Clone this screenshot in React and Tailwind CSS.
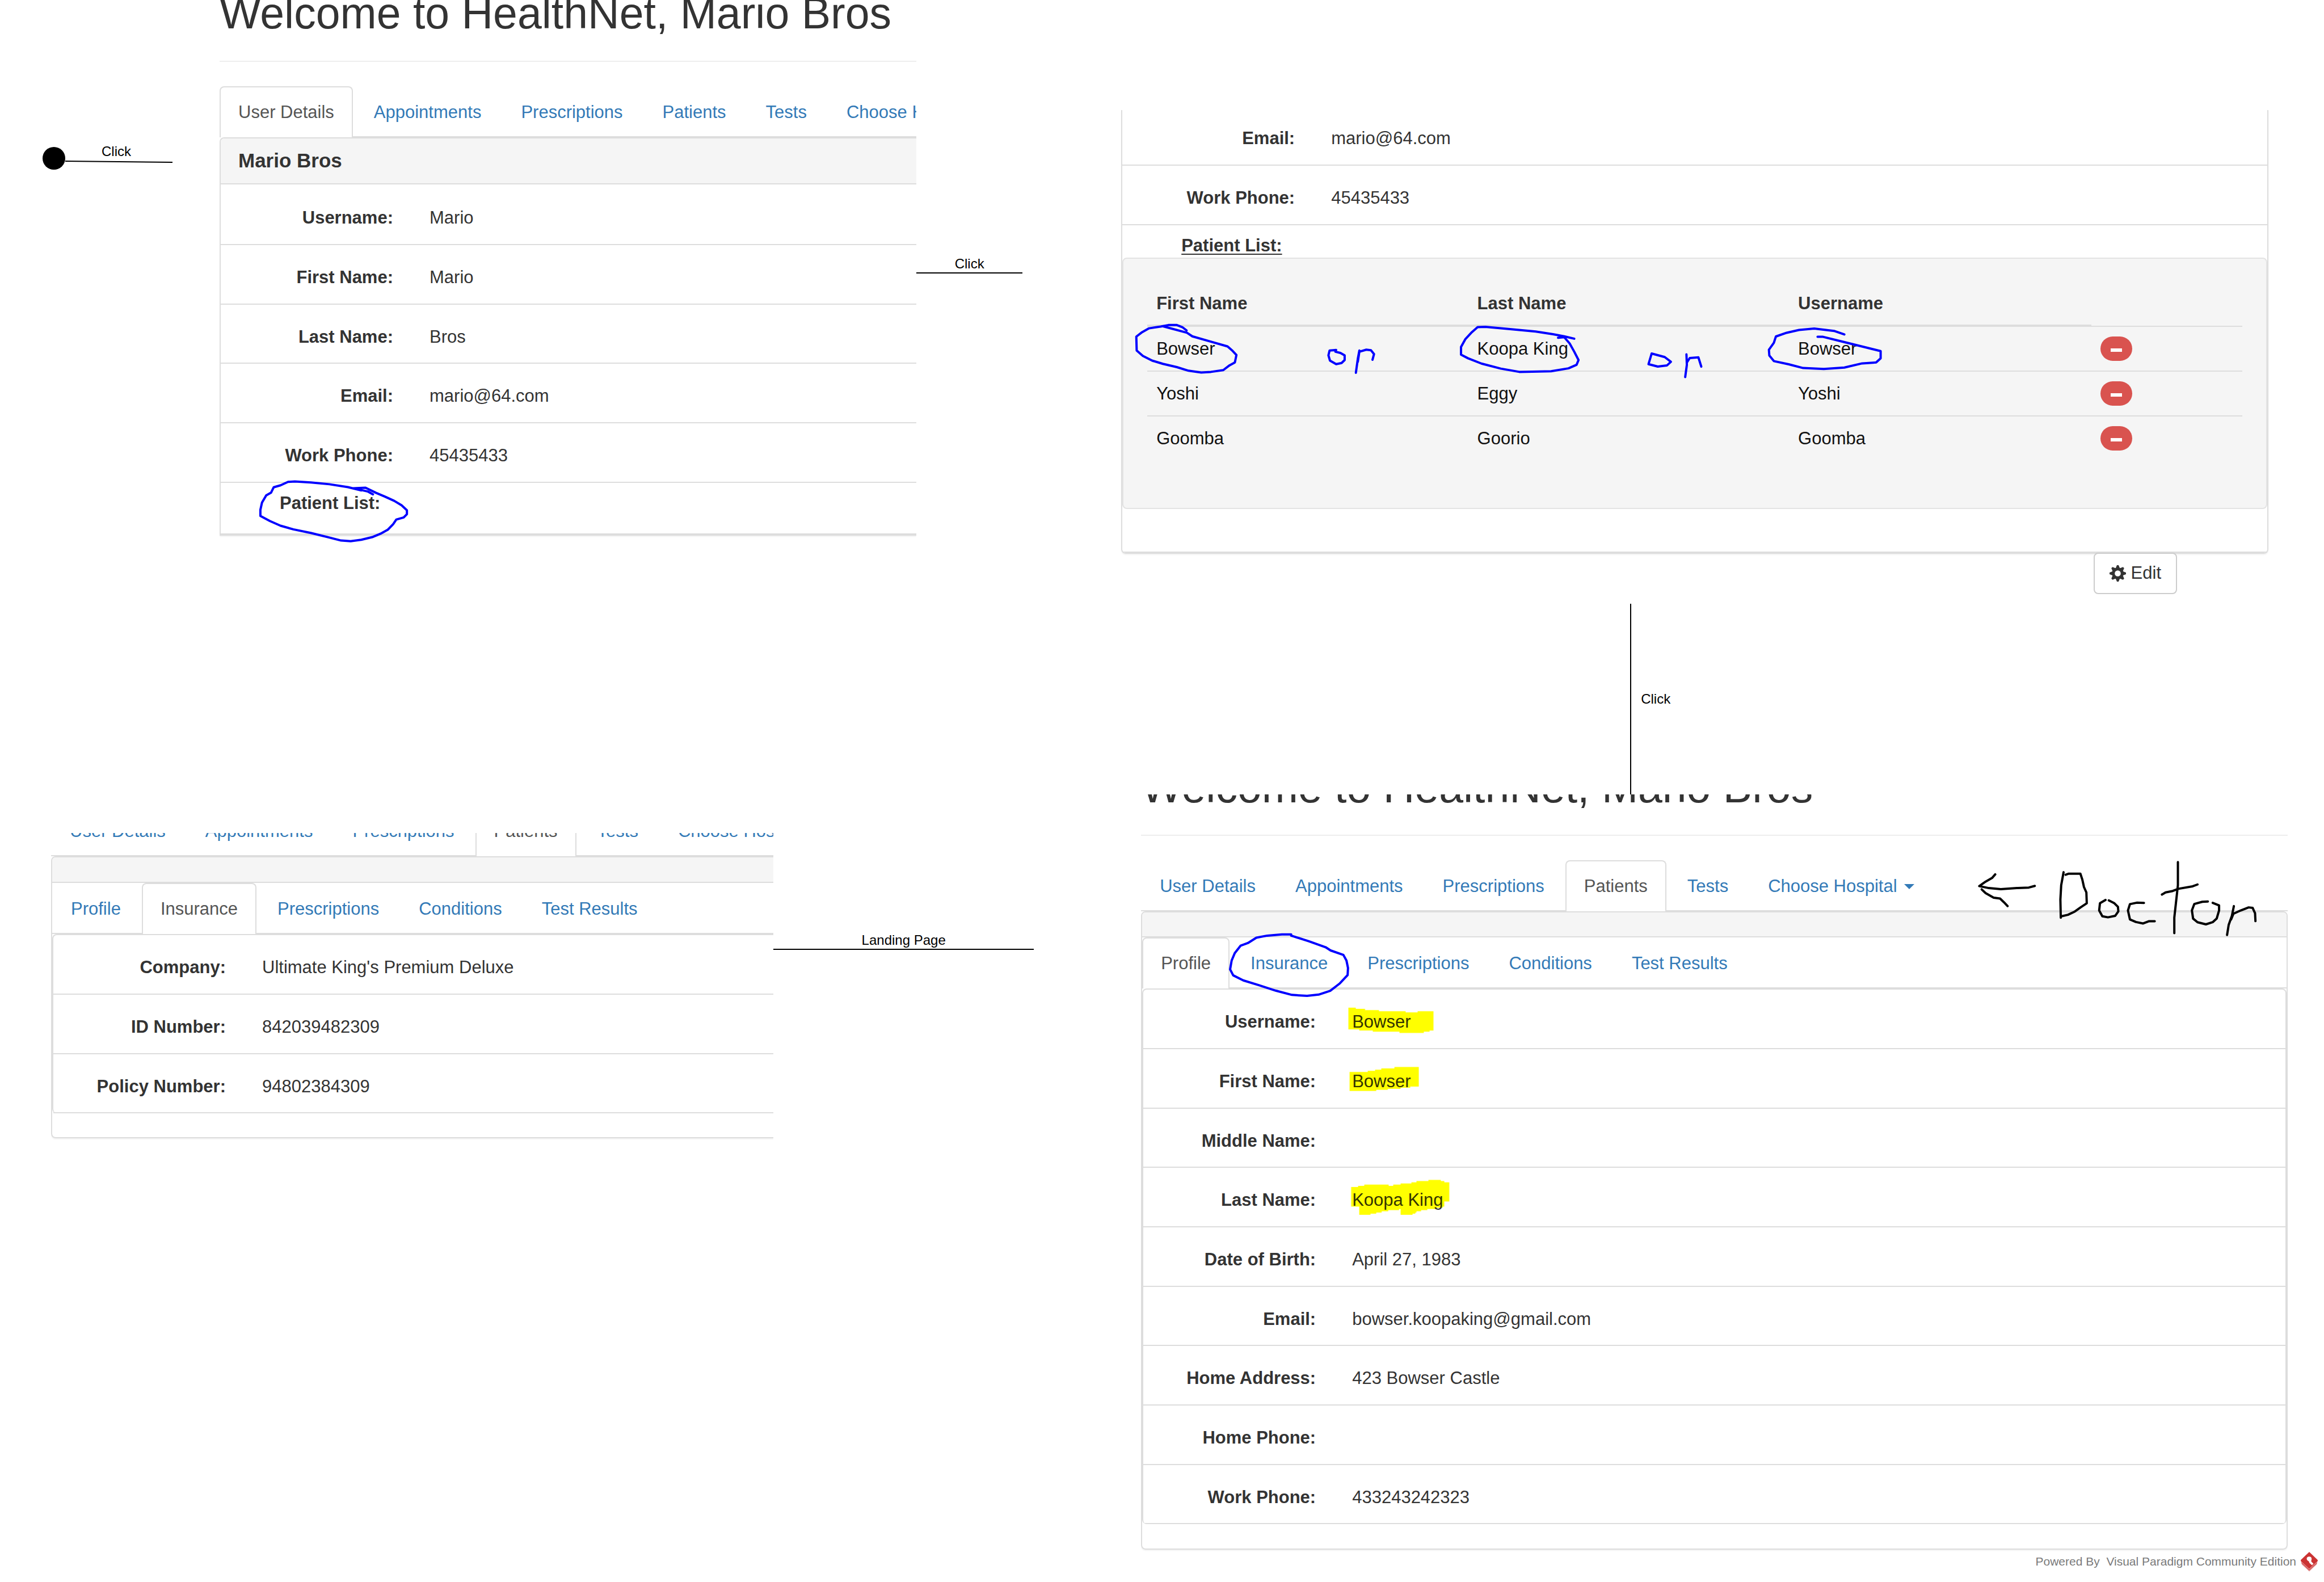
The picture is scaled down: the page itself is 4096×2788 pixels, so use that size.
import React from "react";

const MAIN_TABS = ["User Details", "Appointments", "Prescriptions", "Patients", "Tests", "Choose Hospital"];
const PATIENT_TABS = ["Profile", "Insurance", "Prescriptions", "Conditions", "Test Results"];

const PATIENTS = [
  ["Bowser", "Koopa King", "Bowser"],
  ["Yoshi", "Eggy", "Yoshi"],
  ["Goomba", "Goorio", "Goomba"],
];

function Tabs({ items, active, label, caret }) {
  return (
    <nav aria-label={label} className="flex gap-1 whitespace-nowrap shadow-[inset_0_-2px_0_#ddd]">
      {items.map((item) => (
        <a
          key={item}
          href="#"
          aria-current={item === active ? "page" : undefined}
          className={
            item === active
              ? "flex h-[90px] items-center rounded-t-lg border-2 border-b-0 border-[#ddd] bg-white px-[31px] text-[#555]"
              : "flex h-[90px] items-center border-2 border-b-0 border-transparent px-[31px] text-[#337ab7]"
          }
        >
          {item}
          {caret && item === "Choose Hospital" && (
            <svg viewBox="0 0 18 9" className="ml-3 h-[9px] w-[18px]" aria-hidden="true">
              <path d="M0 0H18L9 9Z" fill="#337ab7" />
            </svg>
          )}
        </a>
      ))}
    </nav>
  );
}

function Title() {
  return (
    <h1 className="border-b-2 border-[#eee] pb-[42px] text-[77px] leading-[84px] whitespace-nowrap text-[#333]">
      Welcome to HealthNet, Mario Bros
    </h1>
  );
}

function Rows({ rows }) {
  return (
    <dl>
      {rows.map(([name, value]) => (
        <div
          key={name}
          className="flex h-[105px] items-center gap-16 border-b-2 border-[#ddd] pt-3 whitespace-nowrap nth-[3n]:h-[104px]"
        >
          <dt className="w-[304px] text-right font-bold">{name}</dt>
          <dd>{value}</dd>
        </div>
      ))}
    </dl>
  );
}

function Ink({ label, color, children }) {
  return (
    <svg
      role="img"
      aria-label={label}
      className="pointer-events-none absolute top-0 left-0 h-px w-px overflow-visible"
      fill="none"
      stroke={color}
      strokeWidth="4"
      strokeLinecap="round"
      strokeLinejoin="round"
    >
      {children}
    </svg>
  );
}

function Stroke({ d }) {
  return <path d={d} vectorEffect="non-scaling-stroke" />;
}

function Arrow({ label }) {
  return (
    <div className="flex flex-col">
      <span className="text-center text-2xl leading-[30px] text-black">{label}</span>
      <div className="h-[2px] bg-black" />
    </div>
  );
}

function DoctorDetails() {
  return (
    <section className="relative min-w-0 flex-1 overflow-hidden pb-4">
      <div className="-mt-[19px] mb-[43px]">
        <Title />
      </div>
      <Tabs items={MAIN_TABS} active="User Details" label="Doctor sections" />
      <div className="rounded-tl-lg border-y-2 border-l-2 border-[#ddd] shadow-[0_2px_2px_rgba(0,0,0,0.05)]">
        <h2 className="mb-[2px] flex h-[81px] items-center rounded-tl-md border-b-2 border-[#ddd] bg-[#f5f5f5] px-[31px] text-[35px] font-bold">
          Mario Bros
        </h2>
        <Rows
          rows={[
            ["Username:", "Mario"],
            ["First Name:", "Mario"],
            ["Last Name:", "Bros"],
            ["Email:", "mario@64.com"],
            ["Work Phone:", "45435433"],
          ]}
        />
        <div className="border-b-2 border-[#ddd] pt-[14px] pb-8 pl-[104px] leading-[43px]">
          <button className="block font-bold">Patient List:</button>
        </div>
      </div>
      <Ink label="Patient List circled" color="#00f">
        <g transform="matrix(0.9357 0 0 0.3179 -31 463)">
          <Stroke d="M322 1284L312 1268L285 1250L308 1247L328 1276L345 1297L362 1320L376 1345L386 1372L386 1394L380 1412L366 1424L360 1450L350 1480L338 1500L322 1520L300 1536L280 1544L262 1540L238 1522L205 1498L172 1478L148 1458L128 1432L110 1404L110 1370L113 1330L121 1290L130 1275L135 1245L148 1234L162 1215L175 1213L205 1218L240 1228L275 1244L300 1262" />
        </g>
      </Ink>
    </section>
  );
}

function PatientListPanel() {
  return (
    <section className="relative mt-[194px] mr-[98px] ml-[133px]">
      <div className="overflow-hidden rounded-b-lg border-2 border-t-0 border-[#ddd] shadow-[0_2px_2px_rgba(0,0,0,0.05)]">
        <div className="-mt-2 pt-px">
          <Rows
            rows={[
              ["Email:", "mario@64.com"],
              ["Work Phone:", "45435433"],
            ]}
          />
        </div>
        <div className="border-b-2 border-[#ddd] pt-[14px] pb-[75px]">
          <button className="ml-[104px] block leading-[43px] font-bold underline decoration-2 underline-offset-4">
            Patient List:
          </button>
          <div className="rounded-lg border-2 border-[#e3e3e3] bg-[#f5f5f5] px-[42px] pt-[41px] pb-[84px]">
            <table className="w-full table-fixed border-separate border-spacing-0 text-left leading-[43px]">
              <colgroup>
                <col className="w-[29.3%]" />
                <col className="w-[29.3%]" />
                <col className="w-[27.6%]" />
                <col />
              </colgroup>
              <thead>
                <tr>
                  {["First Name", "Last Name", "Username"].map((h) => (
                    <th key={h} scope="col" className="border-b-2 border-[#ddd] px-4 py-4 font-bold">
                      {h}
                    </th>
                  ))}
                </tr>
              </thead>
              <tbody className="text-[#111]">
                {PATIENTS.map((row) => (
                  <tr key={row[0]}>
                    {row.map((cell, i) => (
                      <td key={i} className="border-t-2 border-[#ddd] px-4 py-[17px]">
                        {cell}
                      </td>
                    ))}
                    <td className="border-t-2 border-[#ddd] px-4 py-[17px]">
                      <button
                        aria-label={"Remove " + row[0]}
                        className="flex h-[43px] w-[56px] items-center justify-center rounded-full bg-[#d9534f] pt-1"
                      >
                        <span className="h-[6px] w-5 bg-white" />
                      </button>
                    </td>
                  </tr>
                ))}
              </tbody>
            </table>
          </div>
        </div>
      </div>
      <div className="flex justify-end pr-[161px]">
        <button className="relative -mt-[2px] flex h-[73px] items-center gap-[9px] rounded-lg border-2 border-[#ccc] bg-white px-[26px]">
          <svg viewBox="-15 -15 30 30" className="h-[29px] w-[29px]" fill="none" aria-hidden="true">
            <circle r="8" stroke="#333" strokeWidth="5" />
            <g fill="#333">
              {[0, 45, 90, 135, 180, 225, 270, 315].map((a) => (
                <path key={a} d="M-4 -9L-1.500 -15H1.500L4 -9Z" transform={"rotate(" + a + ")"} />
              ))}
            </g>
          </svg>
          Edit
        </button>
      </div>
      <Ink label="Bowser or Koopa King or Bowser" color="#00f">
        <g transform="matrix(0.6813 0 0 0.5223 -53 -16)">
          <Stroke d="M186 760L248 782L262 794L310 812L353 828L366 843L376 857L372 882L358 892L342 908L310 914L285 916L252 910L222 898L186 887L158 876L134 860L118 842L117 795L132 780L150 767L180 761L200 756L222 756L236 763L247 774" />
          <Stroke d="M634 840L617 842L614 858L618 876L634 888L648 884L656 874L656 858L645 850L632 846" />
          <Stroke d="M694 842L690 870L685 917M690 880L694 846L712 839L724 841L732 854L728 873" />
          <Stroke d="M1250 802L1224 794L1195 787L1150 778L1080 769L1020 762L1000 763L985 780L968 804L957 830L957 856L975 868L1010 886L1060 903L1108 914L1190 912L1235 902L1256 890L1261 874L1250 846L1238 818L1224 797L1208 799" />
          <Stroke d="M1450 853L1442 888L1466 896L1490 892L1500 880L1484 864L1450 852" />
        </g>
        <g transform="matrix(0.7267 0 0 0.4088 944 269)">
          <Stroke d="M72 395L73 440L69 493M73 430L80 411L101 408L108 448" />
          <Stroke d="M455 309L430 294L382 284L345 290L315 302L289 318L284 345L272 375L273 400L284 424L320 438L355 454L405 458L455 452L498 434L532 430L543 412L543 381L500 362L450 340L402 319L390 319" />
        </g>
      </Ink>
    </section>
  );
}

function InsurancePanel() {
  return (
    <section className="relative min-w-0 flex-1 overflow-hidden pb-2">
      <div className="-mt-[49px]">
        <Tabs items={MAIN_TABS} active="Patients" label="Doctor sections, insurance view" />
      </div>
      <div className="rounded-l-lg border-y-2 border-l-2 border-[#ddd] pb-[42px] shadow-[0_2px_2px_rgba(0,0,0,0.05)]">
        <div className="h-[45px] rounded-tl-md border-b-2 border-[#ddd] bg-[#f5f5f5]" />
        <Tabs items={PATIENT_TABS} active="Insurance" label="Patient sections, insurance view" />
        <div className="rounded-l-lg border-t-2 border-l-2 border-[#ddd]">
          <Rows
            rows={[
              ["Company:", "Ultimate King's Premium Deluxe"],
              ["ID Number:", "842039482309"],
              ["Policy Number:", "94802384309"],
            ]}
          />
        </div>
      </div>
    </section>
  );
}

function ProfilePanel() {
  return (
    <section className="relative mr-[64px] ml-[168px] overflow-hidden pb-1">
      <div className="-mt-[55px] mb-[43px]">
        <Title />
      </div>
      <Tabs items={MAIN_TABS} active="Patients" label="Doctor sections, profile view" caret />
      <div className="rounded-lg border-2 border-[#ddd] pb-[43px] shadow-[0_2px_2px_rgba(0,0,0,0.05)]">
        <div className="h-11 rounded-t-md border-b-2 border-[#ddd] bg-[#f5f5f5]" />
        <Tabs items={PATIENT_TABS} active="Profile" label="Patient sections, profile view" />
        <div className="overflow-hidden rounded-lg border-2 border-b-0 border-[#ddd]">
          <Rows
            rows={[
              ["Username:", "Bowser"],
              ["First Name:", "Bowser"],
              ["Middle Name:", ""],
              ["Last Name:", "Koopa King"],
              ["Date of Birth:", "April 27, 1983"],
              ["Email:", "bowser.koopaking@gmail.com"],
              ["Home Address:", "423 Bowser Castle"],
              ["Home Phone:", ""],
              ["Work Phone:", "433243242323"],
            ]}
          />
        </div>
      </div>
      <svg
        aria-hidden="true"
        className="pointer-events-none absolute top-0 left-0 h-px w-px overflow-visible mix-blend-multiply"
      >
        <g transform="matrix(0.6813 0 0 0.5223 -31 -18)" fill="#ff0">
          <path d="M582 754H601V758H625V762H661V766H730V770H761V766H802V831H792V835H777V839H714V835H645V831H610V827H582Z" />
          <path d="M585 971H632V967H651V963H667V959H701V954H764V1020H742V1024H717V1028H684V1031H654V1035H585Z" />
          <path d="M589 1359H607V1355H623V1351H686V1355H698V1351H717V1347H745V1343H758V1339H789V1335H821V1339H830V1343H843V1408H830V1425H826V1429H810V1433H786V1437H770V1441H758V1445H755V1449H748V1453H717V1433H713V1437H685V1441H668V1445H654V1449H639V1453H610V1425H589Z" />
        </g>
      </svg>
      <Ink label="Insurance circled" color="#00f">
        <g transform="matrix(0.6813 0 0 0.5223 -31 -18)">
          <Stroke d="M434 507L410 507L372 511L344 518L322 536L303 545L288 570L280 595L276 625L284 645L310 662L350 678L395 697L436 711L475 714L505 710L535 697L560 672L580 644L581 620L577 595L569 576L536 561L523 550L480 530L434 511" />
        </g>
      </Ink>
      <Ink label="Arrow from Doctor" color="#000">
        <g transform="matrix(0.7045 0 0 0.3179 980 -18)">
          <Stroke d="M746 500L738 520L722 540L706 565L730 576L760 582L800 576L830 573L845 564" />
          <Stroke d="M712 583L722 604L742 629L758 634L768 655L777 676" />
          <Stroke d="M917 488L911 560L909 640L910 740M922 502L930 496L959 496L964 530L968 570L974 600L975 660L960 682L945 706L928 724L912 732" />
          <Stroke d="M1022 642L1008 660L1006 700L1014 732L1028 738L1046 730L1054 705L1053 680L1044 660L1030 644" />
          <Stroke d="M1118 658L1100 657L1083 665L1078 700L1083 750L1098 764L1116 772L1130 760L1145 760" />
          <Stroke d="M1203 432V560L1198 660L1194 740V826M1163 612L1172 600L1190 592L1204 580L1240 566L1252 556" />
          <Stroke d="M1278 650L1264 652L1244 664L1238 700L1241 745L1252 765L1273 777L1290 765L1300 745L1306 700L1306 672L1290 658" />
          <Stroke d="M1343 676L1338 730L1330 780L1326 836M1336 750L1342 718L1360 700L1380 683L1390 686L1396 715L1397 759" />
        </g>
      </Ink>
    </section>
  );
}

function Logo() {
  return (
    <svg viewBox="42 30 126 144" className="h-[34px] w-[30px]" aria-hidden="true">
      <path d="M105 30L164 86L168 92L160 122L105 174L50 122L42 92L46 86Z" fill="#cb3333" />
      <path
        d="M105 65C93 65 86 72 86 81C86 90 94 96 102 100L106 112L128 132L140 121L121 103C118 99 122 92 123 82C123 72 116 65 105 65Z"
        fill="#fff"
      />
      <path d="M46 104L105 158L164 104M50 120L105 170L160 120" fill="none" stroke="#e59595" strokeWidth="5" />
      <path d="M42 92L105 150L168 92" fill="none" stroke="#cb3333" strokeWidth="5" />
    </svg>
  );
}

export default function App() {
  return (
    <main className="min-h-screen w-full overflow-hidden bg-white font-['Liberation_Sans',Arial,sans-serif] text-[31px] text-[#333]">
      <div className="flex">
        <div className="flex w-[45%] flex-col">
          <div className="flex items-start pr-[41px]">
            <div className="flex w-[387px] shrink-0 items-start pt-[252px] pl-[75px]">
              <span className="mt-[7px] h-10 w-10 rounded-full bg-black" />
              <div className="w-[189px]">
                <span className="block pr-[9px] pb-px text-center text-2xl leading-[30px] text-black">Click</span>
                <svg viewBox="0 0 189 4" className="h-1 w-full" aria-hidden="true">
                  <path d="M0 1L189 3" stroke="#000" strokeWidth="2" />
                </svg>
              </div>
            </div>
            <DoctorDetails />
            <div className="w-[187px] shrink-0 pt-[450px]">
              <Arrow label="Click" />
            </div>
          </div>
          <div className="mt-[508px] flex items-start pr-[21px] pl-[90px]">
            <InsurancePanel />
            <div className="w-[459px] shrink-0 pt-[174px]">
              <Arrow label="Landing Page" />
            </div>
          </div>
        </div>
        <div className="flex min-w-0 flex-1 flex-col">
          <PatientListPanel />
          <div className="mt-[17px] ml-[1030px] flex h-[336px] items-center border-l-2 border-black pl-[17px] text-2xl text-black">
            Click
          </div>
          <ProfilePanel />
        </div>
      </div>
      <footer className="flex items-center justify-end gap-2 pr-[11px] text-[21px] text-[#7a7a7a]">
        <span className="whitespace-pre">Powered By  Visual Paradigm Community Edition</span>
        <Logo />
      </footer>
    </main>
  );
}
